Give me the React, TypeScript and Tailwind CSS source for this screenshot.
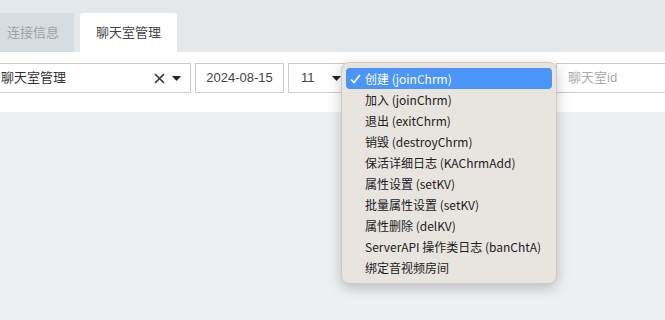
const items = [
  "创建 (joinChrm)",
  "加入 (joinChrm)",
  "退出 (exitChrm)",
  "销毁 (destroyChrm)",
  "保活详细日志 (KAChrmAdd)",
  "属性设置 (setKV)",
  "批量属性设置 (setKV)",
  "属性删除 (delKV)",
  "ServerAPI 操作类日志 (banChtA)",
  "绑定音视频房间",
];

function Caret() {
  return (
    <svg width="9" height="5" viewBox="0 0 9 5" className="shrink-0">
      <path d="M0 0 H9 L4.5 5 Z" fill="#222" />
    </svg>
  );
}

export default function App() {
  const font = { fontFamily: '"Liberation Sans", "Noto Sans CJK SC", sans-serif' };
  return (
    <div
      className="relative w-[665px] h-[320px] overflow-hidden bg-[#eef0f2] text-[#333]"
      style={font}
    >
      {/* tabs */}
      <div className="h-[52px] bg-[#e4e8eb] flex items-end gap-[6px]">
        <div className="h-[39px] pl-[7px] pr-[15px] bg-[#d5dce2] flex items-center text-[13px] text-[#9aa3ab]">
          连接信息
        </div>
        <div className="h-[39px] px-[16px] bg-white rounded-t-[3px] flex items-center text-[13px] text-[#444]">
          聊天室管理
        </div>
      </div>

      {/* form row */}
      <div className="h-[60px] bg-white pt-[11px] flex items-start gap-[4px] text-[13px]">
        <div className="shrink-0 ml-[-10px] w-[201px] h-[30px] border border-[#ccc] flex items-center pl-[10px] pr-[9px]">
          <span className="flex-1 text-[#333]">聊天室管理</span>
          <svg width="11" height="11" viewBox="0 0 11 11" className="mr-[7px]">
            <path d="M1 1 L10 10 M10 1 L1 10" stroke="#333" strokeWidth="1.6" />
          </svg>
          <Caret />
        </div>
        <div className="shrink-0 w-[89px] h-[30px] border border-[#ccc] flex items-center justify-center text-[#444]">
          2024-08-15
        </div>
        <div className="shrink-0 w-[70px] h-[30px] border border-[#ccc] flex items-center pl-[12px]">
          <span className="flex-1 text-[#444]">11</span>
          <span className="mr-[16px]">
            <Caret />
          </span>
        </div>
        <div className="shrink-0 ml-[194px] w-[120px] h-[30px] border border-[#ccc] flex items-center pl-[11px] text-[#aaa]">
          聊天室id
        </div>
      </div>

      {/* dropdown menu */}
      <div
        className="absolute left-[341px] top-[62px] w-[216px] h-[222px] bg-[#e8e4e0] rounded-[8px] border border-[#cfcac5] shadow-[0_4px_14px_rgba(0,0,0,0.22)] py-[5px] px-[4px]"
        style={{ fontFamily: '"Noto Sans CJK SC", "Liberation Sans", sans-serif' }}
      >
        {items.map((t, i) => (
          <div
            key={t}
            className={
              i === 0
                ? "h-[21px] rounded-[4px] bg-[#4b94f8] text-white flex items-center pl-[4px] text-[12px]"
                : "h-[21px] flex items-center pl-[19px] text-[12px] text-[#222]"
            }
          >
            {i === 0 && (
              <svg width="11" height="10" viewBox="0 0 11 10" className="mr-[4px]">
                <path d="M1 5.5 L4 8.5 L10 1" stroke="white" strokeWidth="1.6" fill="none" />
              </svg>
            )}
            {t}
          </div>
        ))}
      </div>
    </div>
  );
}
